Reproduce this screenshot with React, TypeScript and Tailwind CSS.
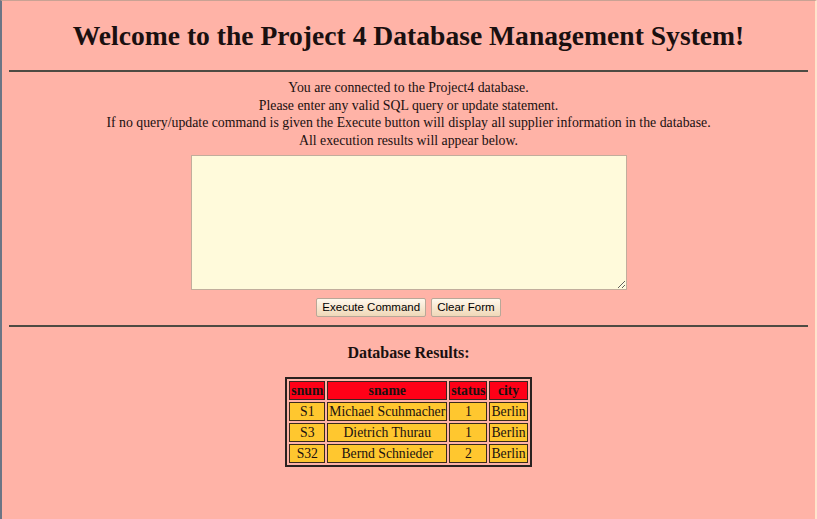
export default function App() {
  const rows = [
    { snum: 'S1', sname: 'Michael Scuhmacher', status: '1', city: 'Berlin' },
    { snum: 'S3', sname: 'Dietrich Thurau', status: '1', city: 'Berlin' },
    { snum: 'S32', sname: 'Bernd Schnieder', status: '2', city: 'Berlin' },
  ];

  return (
    <div className="h-[519px] w-[817px] overflow-hidden bg-[#ffb3a7] border-l-2 border-l-[#6b7585] border-t border-t-[#c9a294] border-r-2 border-r-[#ffe4cc] font-['Liberation_Serif',serif] text-[#1a1010] text-center">
      <div className="px-[7px]">
        <h1 className="pt-[19px] text-[27.6px] leading-[32px] font-bold">
          Welcome to the Project 4 Database Management System!
        </h1>
        <hr className="mt-[18px] border-t-2 border-[#4d4b43]" />

        <div className="mt-[7px] text-[13.8px] leading-[17.5px]">
          <p>You are connected to the Project4 database.</p>
          <p>Please enter any valid SQL query or update statement.</p>
          <p>If no query/update command is given the Execute button will display all supplier information in the database.</p>
          <p>All execution results will appear below.</p>
        </div>

        <div className="mt-[6px] flex justify-center">
          <textarea className="w-[436px] h-[135px] bg-[#fffadb] border border-[#c2ad9c] resize-y outline-none block" />
        </div>

        <div className="mt-[8px] flex justify-center gap-[5px] font-['Liberation_Sans',sans-serif] text-[11.5px] text-black">
          <button className="h-[19px] px-[5px] leading-[17px] border border-[#b8a898] rounded-[2px] bg-gradient-to-b from-[#fff8ec] to-[#f0d8b8]">
            Execute Command
          </button>
          <button className="h-[19px] px-[5px] leading-[17px] border border-[#b8a898] rounded-[2px] bg-gradient-to-b from-[#fff8ec] to-[#f0d8b8]">
            Clear Form
          </button>
        </div>

        <hr className="mt-[8px] border-t-2 border-[#4d4b43]" />

        <h3 className="mt-[17px] text-[16px] leading-[18px] font-bold">Database Results:</h3>

        <div className="mt-[15px] flex justify-center">
          <table className="border-separate border-spacing-[2px] border-2 border-[#2a2220] text-[13.7px] leading-[15px]">
            <thead>
              <tr>
                {['snum', 'sname', 'status', 'city'].map((h) => (
                  <th key={h} className="bg-[#ff0017] border border-[#3a2420] px-[1px] py-[1px] font-bold">
                    {h}
                  </th>
                ))}
              </tr>
            </thead>
            <tbody>
              {rows.map((r) => (
                <tr key={r.snum}>
                  <td className="bg-[#ffc72f] border border-[#3a2a1a] px-[1px] py-[1px]">{r.snum}</td>
                  <td className="bg-[#ffc72f] border border-[#3a2a1a] px-[1px] py-[1px]">{r.sname}</td>
                  <td className="bg-[#ffc72f] border border-[#3a2a1a] px-[1px] py-[1px]">{r.status}</td>
                  <td className="bg-[#ffc72f] border border-[#3a2a1a] px-[1px] py-[1px]">{r.city}</td>
                </tr>
              ))}
            </tbody>
          </table>
        </div>
      </div>
    </div>
  );
}
